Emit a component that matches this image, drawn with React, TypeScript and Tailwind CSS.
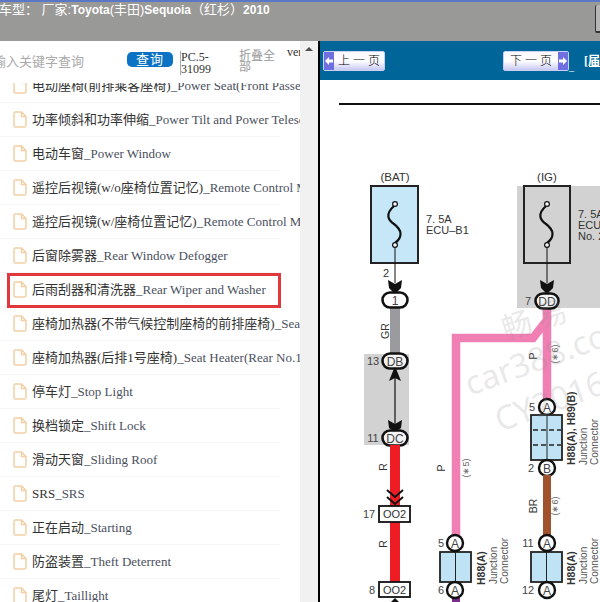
import React from "react";

const rows: [string, string][] = [
  ["电动座椅(前排乘客座椅)", "_Power Seat(Front Passenger Seat)"],
  ["功率倾斜和功率伸缩", "_Power Tilt and Power Telescopic"],
  ["电动车窗", "_Power Window"],
  ["遥控后视镜(w/o座椅位置记忆)", "_Remote Control Mirror"],
  ["遥控后视镜(w/座椅位置记忆)", "_Remote Control Mirror"],
  ["后窗除雾器", "_Rear Window Defogger"],
  ["后雨刮器和清洗器", "_Rear Wiper and Washer"],
  ["座椅加热器(不带气候控制座椅的前排座椅)", "_Seat Heater"],
  ["座椅加热器(后排1号座椅)", "_Seat Heater(Rear No.1 Seat)"],
  ["停车灯", "_Stop Light"],
  ["换档锁定", "_Shift Lock"],
  ["滑动天窗", "_Sliding Roof"],
  ["SRS", "_SRS"],
  ["正在启动", "_Starting"],
  ["防盗装置", "_Theft Deterrent"],
  ["尾灯", "_Taillight"],
];

function FileIcon() {
  return (
    <svg width="14" height="17" viewBox="0 0 14 17" className="shrink-0" fill="none" stroke="#f2cfa4" strokeWidth="1.5">
      <path d="M2.5 1h6l4.5 4.5V14a2 2 0 0 1-2 2H2.5a1.5 1.5 0 0 1-1.5-1.5v-12A1.5 1.5 0 0 1 2.5 1Z" />
      <path d="M8.5 1v4.5H13" />
    </svg>
  );
}

function NavArrow({ dir }: { dir: "l" | "r" }) {
  return (
    <div className="flex w-[10px] items-center justify-center bg-[#6f6fe0]">
      <svg width="8" height="8" viewBox="0 0 8 8" fill="#fff">
        <path d={dir === "l" ? "M0 4L4 0V2.5H8V5.5H4V8Z" : "M8 4L4 0V2.5H0V5.5H4V8Z"} />
      </svg>
    </div>
  );
}

function NavButton({ label, dir }: { label: string; dir: "l" | "r" }) {
  return (
    <div className="flex h-[20px] w-[66px] items-stretch rounded-[2px] border border-[#c8d0f5] bg-gradient-to-b from-[#f8f8ff] via-white to-[#c9c9f2]">
      {dir === "l" && <NavArrow dir="l" />}
      <div className="flex flex-1 items-center justify-center whitespace-pre text-[12px] font-light text-black">{label}</div>
      {dir === "r" && <NavArrow dir="r" />}
    </div>
  );
}

function Pill({ cx, cy, t, rx = 12.5, ry = 7.5 }: { cx: number; cy: number; t: string; rx?: number; ry?: number }) {
  return (
    <g>
      <rect x={cx - rx} y={cy - ry} width={rx * 2} height={ry * 2} rx={ry} fill="#fff" fillOpacity="0.75" stroke="#111" strokeWidth="2.6" />
      <text x={cx} y={cy + 4.5} textAnchor="middle" fontSize="12" fill="#444">{t}</text>
    </g>
  );
}

function Circle({ cx, cy, t }: { cx: number; cy: number; t: string }) {
  return (
    <g>
      <circle cx={cx} cy={cy} r="8" fill="#fff" stroke="#111" strokeWidth="2.4" />
      <text x={cx} y={cy + 4.5} textAnchor="middle" fontSize="12" fill="#444">{t}</text>
    </g>
  );
}

function Fuse({ cx }: { cx: number }) {
  return (
    <g fill="none" stroke="#111">
      <path d={`M${cx - 1} 206 C${cx - 10} 214 ${cx - 7} 220 ${cx - 1} 224 C${cx + 7} 230 ${cx + 8} 237 ${cx} 243`} strokeWidth="2.2" />
      <circle cx={cx} cy={204} r="2.4" fill="#fff" strokeWidth="1.2" />
      <circle cx={cx} cy={245} r="2.4" fill="#fff" strokeWidth="1.2" />
      <path d={`M${cx} 247 V283`} strokeWidth="1" />
      <path d={`M${cx - 7} 280 L${cx} 284 L${cx + 7} 280 L${cx + 6} 288 L${cx} 294 L${cx - 6} 288 Z`} fill="#111" stroke="none" />
    </g>
  );
}

function VText({ x, y, t, bold, size = 10.5, color = "#333", start }: { x: number; y: number; t: string; bold?: boolean; size?: number; color?: string; start?: boolean }) {
  return (
    <text x={x} y={y} transform={`rotate(-90 ${x} ${y})`} textAnchor={start ? "start" : "middle"} fontSize={size} fontWeight={bold ? 700 : 400} fill={color}>
      {t}
    </text>
  );
}

function Junction({ x, y, h, label, lx }: { x: number; y: number; h: number; label: string; lx: number }) {
  return (
    <g>
      <rect x={x} y={y} width="31" height={h} fill="#bfe3f5" stroke="#222" strokeWidth="1.8" />
      <path d={`M${x + 15.5} ${y}V${y + h}`} stroke="#222" strokeWidth="1" />
      <VText x={lx} y={585} t={label} bold size={10.5} start />
      <VText x={lx + 12} y={584} t="Junction" color="#555" size={10} start />
      <VText x={lx + 23} y={584} t="Connector" color="#555" size={10} start />
    </g>
  );
}

function Diagram() {
  return (
    <svg viewBox="320 80 280 522" className="block h-[522px] w-[280px]" style={{ fontFamily: '"Liberation Sans", sans-serif' }}>
      <rect x="320" y="80" width="280" height="522" fill="#fff" />
      <path d="M339 104H600" stroke="#111" strokeWidth="2" />

      <text x="395" y="181" textAnchor="middle" fontSize="11.5" fill="#333">(BAT)</text>
      <rect x="371" y="186" width="47" height="77" fill="#c5e7f7" stroke="#222" strokeWidth="2" />
      <Fuse cx={395} />
      <text x="426" y="223" fontSize="11" fill="#333">7. 5A</text>
      <text x="426" y="234" fontSize="11" fill="#333">ECU–B1</text>
      <text x="386" y="277" textAnchor="middle" fontSize="11" fill="#333">2</text>

      <rect x="390" y="306" width="10" height="50" fill="#9b9b9f" />
      <VText x={389} y={331} t="GR" />
      <Pill cx={395} cy={300} t="1" />

      <rect x="364" y="354" width="45" height="91" fill="#d2d2d2" />
      <text x="373" y="365" textAnchor="middle" fontSize="11" fill="#444">13</text>
      <text x="373" y="442" textAnchor="middle" fontSize="11" fill="#444">11</text>
      <path d="M395 370V426" stroke="#111" strokeWidth="1.2" />
      <path d="M389 381L395 366L401 381L395 378Z M388 420L395 424L402 420L401 428L395 432L389 428Z" fill="#111" />
      <Pill cx={395} cy={361} t="DB" />
      <Pill cx={395} cy={438} t="DC" />

      <rect x="390" y="445" width="10" height="62" fill="#ee1c25" />
      <rect x="390" y="522" width="10" height="61" fill="#ee1c25" />
      <VText x={387} y={467} t="R" />
      <VText x={387} y={544} t="R" />
      <path d="M387 490L395 497L403 490M387 497L395 504L403 497" fill="none" stroke="#111" strokeWidth="2" />
      <rect x="379" y="506" width="31" height="16" fill="#fff" stroke="#111" strokeWidth="1.8" />
      <text x="394.5" y="518" textAnchor="middle" fontSize="11" fill="#333">OO2</text>
      <text x="369" y="518" textAnchor="middle" fontSize="11" fill="#444">17</text>
      <rect x="379" y="582" width="31" height="15" fill="#fff" stroke="#111" strokeWidth="1.8" />
      <text x="394.5" y="594" textAnchor="middle" fontSize="11" fill="#333">OO2</text>
      <text x="372" y="594" textAnchor="middle" fontSize="11" fill="#444">8</text>
      <path d="M391 602L395 598L399 602Z" fill="#111" />

      <rect x="517" y="186" width="83" height="122" fill="#d2d2d2" />
      <text x="547" y="181" textAnchor="middle" fontSize="11.5" fill="#333">(IG)</text>
      <rect x="524" y="186" width="46" height="77" fill="#d2d2d2" stroke="#222" strokeWidth="2" />
      <Fuse cx={547} />
      <text x="578" y="218" fontSize="11" fill="#333">7. 5A</text>
      <text x="578" y="229" fontSize="11" fill="#333">ECU–IG1</text>
      <text x="578" y="240" fontSize="11" fill="#333">No. 2</text>
      <text x="528" y="305" textAnchor="middle" fontSize="11" fill="#444">7</text>

      <path d="M547 308V400 M547 320L533 338H456V536" fill="none" stroke="#f07fb3" strokeWidth="8.5" />
      <Pill cx={547} cy={301} t="DD" rx={11.5} />
      <VText x={537} y={356} t="P" />
      <VText x={558} y={354} t="(∗6)" size={9} color="#666" />
      <VText x={445} y={468} t="P" />
      <VText x={469} y={468} t="(∗5)" size={9} color="#666" />

      <Circle cx={547} cy={407} t="A" />
      <text x="532" y="411" textAnchor="middle" fontSize="11" fill="#444">5</text>
      <rect x="531" y="415" width="31" height="45" fill="#bfe3f5" stroke="#222" strokeWidth="1.8" />
      <path d="M547 415V460" stroke="#222" strokeWidth="1" />
      <path d="M533 430H561M533 445H561" stroke="#222" strokeWidth="1.6" strokeDasharray="5 3" />
      <VText x={575} y={465} t="H88(A), H89(B)" bold start />
      <VText x={587} y={465} t="Junction" color="#555" size={10} start />
      <VText x={598} y={465} t="Connector" color="#555" size={10} start />
      <Circle cx={547} cy={468} t="B" />
      <text x="531" y="472" textAnchor="middle" fontSize="11" fill="#444">2</text>

      <rect x="543" y="475" width="8" height="62" fill="#a0522d" />
      <VText x={537} y={506} t="BR" />
      <VText x={558} y={506} t="(∗6)" size={9} color="#666" />

      <rect x="452" y="597" width="8" height="5" fill="#7b2d8b" />
      <Junction x={440} y={552} h={30} label="H88(A)" lx={485} />
      <Circle cx={455} cy={543} t="A" />
      <Circle cx={455} cy={590} t="A" />
      <text x="441" y="547" textAnchor="middle" fontSize="11" fill="#444">5</text>
      <text x="441" y="594" textAnchor="middle" fontSize="11" fill="#444">6</text>

      <Junction x={531} y={552} h={30} label="H88(A)" lx={575} />
      <Circle cx={547} cy={543} t="A" />
      <Circle cx={547} cy={590} t="A" />
      <text x="528" y="547" textAnchor="middle" fontSize="11" fill="#444">11</text>
      <text x="528" y="594" textAnchor="middle" fontSize="11" fill="#444">12</text>

      <g fill="#8a8a8a" fillOpacity="0.2" style={{ fontFamily: '"Noto Sans", "Noto Sans CJK SC", sans-serif' }}>
        <text x="506" y="340" fontSize="30" transform="rotate(-18 506 340)" style={{ fontFamily: '"Noto Sans CJK SC", sans-serif' }}>畅 易</text>
        <text x="470" y="396" fontSize="33" transform="rotate(-20 470 396)">car388.com</text>
        <text x="500" y="432" fontSize="33" transform="rotate(-20 500 432)">CY2016</text>
      </g>
    </svg>
  );
}

export default function App() {
  return (
    <div className="flex h-[602px] w-[600px] flex-col overflow-hidden bg-white" style={{ fontFamily: '"Liberation Serif", "Noto Sans CJK SC", serif' }}>
      <header className="relative h-[41px] shrink-0 border-t-2 border-[#5b78c6] bg-[#999997]">
        <div className="-ml-px whitespace-pre text-[13px] leading-[16px] text-white" style={{ fontFamily: '"Liberation Sans", "Noto Sans CJK SC", sans-serif' }}>
          车型： 厂家:<b className="text-[12px]">Toyota</b>(丰田)<b className="text-[12px]">Sequoia</b>（红杉）<b className="text-[12px]">2010</b>
        </div>
        <div className="absolute right-0 top-[3px] h-[28px] w-[5px] rounded-l-[2px] border-b-2 border-l border-[#333] bg-[#b5b5b5]" />
      </header>

      <div className="flex min-h-0 flex-1">
        <aside className="flex w-[300px] shrink-0 flex-col overflow-hidden">
          <div className="flex h-[42px] shrink-0 items-start">
            <div className="mt-[10px] w-[125px] overflow-hidden whitespace-nowrap text-[14px] leading-[20px] text-[#aaa]">
              <span className="-ml-[7px] block" style={{ fontFamily: '"Noto Sans CJK SC", sans-serif', fontSize: 13 }}>输入关键字查询</span>
            </div>
            <div className="ml-[2px] mt-[11px] flex h-[15px] w-[46px] items-center justify-center rounded-[5px] bg-[#0b72c4] text-[13px] tracking-[1px] text-white">查询</div>
            <div className="ml-[7px] mt-[10px] w-[35px] break-words border-l border-[#aaa] text-[12px] leading-[12px] text-[#333]">PC.5-<br />31099</div>
            <div className="ml-[24px] mt-[10px] w-[36px] text-[12px] leading-[11px] text-[#999]">折叠全部</div>
            <div className="ml-auto mt-[2px] w-[13px] overflow-hidden text-right text-[12px] text-[#333]">ver</div>
          </div>
          <div className="min-h-0 flex-1 overflow-hidden">
            <ul className="-mt-[14px] w-[280px]">
              {rows.map(([zh, en], i) => (
                <li key={i} className="relative flex h-[34px] items-center gap-[5px] whitespace-nowrap border-b border-[#f5f5f5] pl-[13px] text-[13px] text-[#333]">
                  <FileIcon />
                  <span>
                    {zh}
                    <span className="text-[13px] text-[#4a5060]">{en}</span>
                  </span>
                  {i === 6 && <div className="absolute left-[7px] top-0 h-[35px] w-[274px] border-[3px] border-[#e0383c]" />}
                </li>
              ))}
            </ul>
          </div>
        </aside>

        <div className="flex w-[18px] shrink-0 justify-center bg-[#f1f1f1] pt-[6px]">
          <div className="h-0 w-0 border-x-[4px] border-b-[4px] border-x-transparent border-b-[#505050]" />
        </div>

        <main className="flex min-w-0 flex-1 flex-col border-l-2 border-black">
          <div className="flex h-[39px] shrink-0 items-center whitespace-nowrap bg-[#006699] pl-[3px] text-[12px] text-white">
            <NavButton label="上 一 页" dir="l" />
            <div className="ml-[118px]"><NavButton label="下 一 页" dir="r" /></div>
            <span className="mt-[12px] text-[10px]">_</span>
            <span className="ml-[10px] font-bold underline">[届</span>
          </div>
          <Diagram />
        </main>
      </div>
    </div>
  );
}
